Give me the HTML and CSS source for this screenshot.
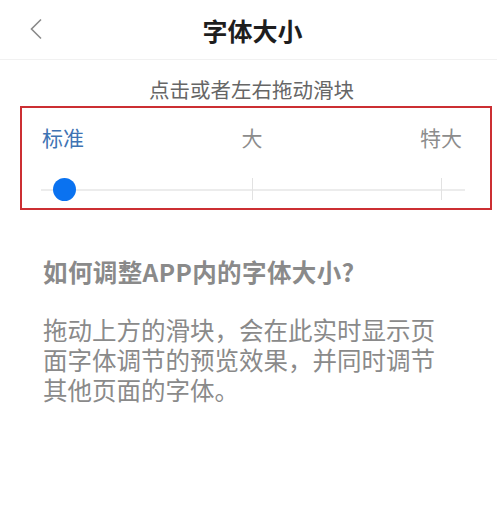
FILE: index.html
```html
<!DOCTYPE html>
<html lang="zh-CN">

<head>
    <meta charset="UTF-8">
    <meta name="viewport" content="width=device-width, initial-scale=1.0">
    <title>字体大小</title>
    <link rel="stylesheet" href="styles.css">
</head>

<body>
    <div class="header">
        <a href="javascript:;" class="back">
            <svg width="14" height="22" viewBox="0 0 14 22">
                <polyline points="12,1.5 2.5,11 12,20.5" fill="none" stroke="#8a8a8a" stroke-width="1.6" />
            </svg>
        </a>
        <h1 class="title">字体大小</h1>
        <span></span>
    </div>

    <p class="tip">点击或者左右拖动滑块</p>

    <div class="size-box">
        <div class="labels">
            <span class="on">标准</span>
            <span>大</span>
            <span>特大</span>
        </div>
        <div class="slider">
            <div class="track"></div>
            <i class="tick tick-mid"></i>
            <i class="tick tick-end"></i>
            <span class="thumb"></span>
        </div>
    </div>

    <div class="help">
        <h2>如何调整APP内的字体大小?</h2>
        <p>拖动上方的滑块，会在此实时显示页面字体调节的预览效果，并同时调节其他页面的字体。</p>
    </div>
</body>

</html>
```

FILE: styles.css
```css
* {
    margin: 0;
    padding: 0;
}

body {
    background: #fff;
    font-family: "Noto Sans CJK SC", "Noto Sans", sans-serif;
}

.header {
    display: grid;
    grid-template-columns: 1fr auto 1fr;
    align-items: center;
    height: 59px;
    padding-left: 8px;
    border-bottom: 1px solid #f1f1f1;
}

.back {
    display: flex;
    padding-left: 21px;
    padding-bottom: 2px;
}

.title {
    font-size: 25px;
    font-weight: bold;
    color: #1e1e1e;
    line-height: 58px;
}

.tip {
    margin: 15px 0 3px;
    padding-left: 6px;
    text-align: center;
    font-size: 20.5px;
    line-height: 28px;
    color: #666;
}

.size-box {
    margin: 0 5px 0 20px;
    border: 2px solid #cc2f33;
    padding: 16px 0 6px;
}

.labels {
    display: flex;
    justify-content: space-between;
    padding: 0 28px 0 20px;
    font-size: 21px;
    line-height: 26px;
    color: #8c8c8c;
}

.labels .on {
    color: #3e73b3;
}

.slider {
    position: relative;
    height: 24px;
    margin: 28px 25px 0 19px;
}

.track {
    position: absolute;
    left: 0;
    right: 0;
    top: 11px;
    height: 2px;
    background: #ececec;
}

.tick {
    position: absolute;
    top: 0;
    width: 1px;
    height: 22px;
    background: #e2e2e2;
}

.tick-mid {
    left: 211px;
}

.tick-end {
    left: 400px;
}

.thumb {
    position: absolute;
    left: 12px;
    top: 0;
    width: 23px;
    height: 23px;
    border-radius: 50%;
    background: #0a72f0;
}

.help {
    padding: 46px 40px 0 43px;
    color: #8a8a8a;
}

.help h2 {
    font-size: 24.5px;
    font-weight: bold;
    line-height: 32px;
    letter-spacing: 0.4px;
}

.help p {
    margin-top: 27px;
    font-size: 24.5px;
    line-height: 30px;
}
```
